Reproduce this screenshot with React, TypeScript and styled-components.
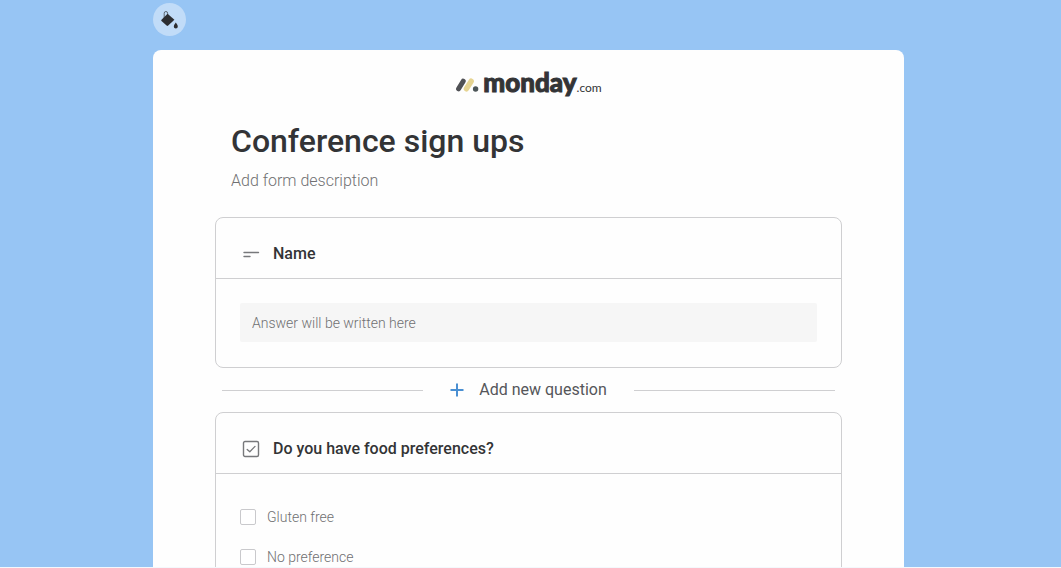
import React from "react";
import styled, { createGlobalStyle } from "styled-components";

const ink = "#333436";
const muted = "#707072";
const line = "#cfcfd1";

const GlobalStyle = createGlobalStyle`
  *, *::before, *::after { box-sizing: border-box; }
  body {
    margin: 0;
    background: #97c5f4;
    color: ${ink};
    font-family: Roboto, "Liberation Sans", sans-serif;
  }
  h1, h2, p { margin: 0; }
  button, input { font: inherit; color: inherit; }
`;

const Page = styled.div`
  height: 100vh;
  overflow: hidden;
  padding: 3px 4px 0 0;
  border-bottom: 1px solid #f4f8fc;
`;

const Column = styled.div`
  width: 100%;
  max-width: 751px;
  margin: 0 auto;
`;

const ThemeButton = styled.button`
  display: flex;
  align-items: center;
  justify-content: center;
  width: 33px;
  height: 33px;
  margin-bottom: 14px;
  padding: 0;
  border: 0;
  border-radius: 50%;
  background: #c1dcf8;
  cursor: pointer;
`;

const Sheet = styled.main`
  padding: 20px 62px 40px;
  border-radius: 8px 8px 0 0;
  background: #fefefe;
`;

const Brand = styled.div`
  display: flex;
  align-items: center;
  justify-content: center;
  gap: 4px;
  height: 30px;
  font-family: Lato, sans-serif;
`;

const Wordmark = styled.div`
  display: flex;
  align-items: baseline;
  line-height: 30px;
`;

const BrandName = styled.span`
  font-size: 26px;
  font-weight: 900;
  -webkit-text-stroke: 1px ${ink};
`;

const BrandSuffix = styled.span`
  font-size: 12px;
`;

const Heading = styled.header`
  padding: 21px 16px 0;
`;

const Title = styled.h1`
  font-size: 32px;
  font-weight: 500;
  line-height: 40px;
`;

const Description = styled.input`
  display: block;
  width: 100%;
  height: 24px;
  margin-top: 7px;
  padding: 0;
  border: 0;
  background: transparent;
  font-size: 16px;
  font-weight: 300;
  &::placeholder { color: ${muted}; opacity: 1; }
`;

const Questions = styled.div`
  margin-top: 25px;
`;

const Card = styled.section`
  border: 1px solid ${line};
  border-radius: 8px;
`;

const CardHeader = styled.div`
  display: flex;
  align-items: center;
  gap: 13px;
  height: 61px;
  padding: 12px 26px 0;
  border-bottom: 1px solid ${line};
`;

const Question = styled.h2`
  font-size: 16px;
  font-weight: 500;
  line-height: 24px;
`;

const CardBody = styled.div`
  padding: 24px 24px 25px;
`;

const Answer = styled.input`
  display: block;
  width: 100%;
  height: 39px;
  padding: 0 12px;
  border: 0;
  border-radius: 2px;
  background: #f6f6f6;
  font-size: 14px;
  font-weight: 300;
  &::placeholder { color: ${muted}; opacity: 1; }
`;

const Divider = styled.div`
  display: flex;
  align-items: center;
  gap: 27px;
  height: 44px;
  padding: 0 7px;
`;

const Rule = styled.span`
  flex: 1;
  height: 1px;
  background: ${line};
`;

const AddButton = styled.button`
  display: flex;
  align-items: center;
  gap: 15px;
  padding: 0;
  border: 0;
  background: none;
  color: #55565a;
  font-size: 16px;
  line-height: 24px;
  cursor: pointer;
`;

const Options = styled.div`
  display: flex;
  flex-direction: column;
  gap: 16px;
  padding: 31px 24px;
`;

const Option = styled.label`
  display: flex;
  align-items: center;
  gap: 11px;
  color: ${muted};
  font-size: 14px;
  font-weight: 300;
  line-height: 24px;
`;

const Tick = styled.input`
  appearance: none;
  width: 16px;
  height: 16px;
  margin: 0;
  border: 1px solid #c9c9cc;
  border-radius: 2px;
  background: #fff;
  &:checked { background: #0073ea; }
`;

const PaintIcon = () => (
  <svg width="22" height="22" viewBox="0 0 22 22" aria-hidden="true">
    <path d="M5.2 9V4.2a1.7 1.7 0 0 1 3.4 0V8" fill="none" stroke="#5a646e" strokeWidth="1" />
    <path d="M8.6 4.8 15.4 10.8 9.2 16.6Q8.4 17.2 7.6 16.6L2.5 12.1Q1.9 11.4 2.5 10.7Z" fill="#2d2e31" />
    <path d="M16.8 13.4Q19 16.2 18.8 17.4a2 2 0 0 1-4 0Q14.6 16.2 16.8 13.4Z" fill="#2d2e31" />
  </svg>
);

const BrandMark = () => (
  <svg width="24" height="16" viewBox="0 0 24 16" aria-hidden="true">
    <path d="M3.6 11.8 8.2 4.2" stroke="#505155" strokeWidth="5" strokeLinecap="round" />
    <path d="M11.4 11.8 16.2 4.2" stroke="#e6d492" strokeWidth="5.4" strokeLinecap="round" />
    <circle cx="20.6" cy="12" r="2.7" fill="#4c5557" />
  </svg>
);

const ShortTextIcon = () => (
  <svg width="18" height="18" viewBox="0 0 18 18" aria-hidden="true">
    <path d="M2 7.5H16.5M2 11.5H8" stroke="#77787b" strokeWidth="1.4" strokeLinecap="round" />
  </svg>
);

const CheckIcon = () => (
  <svg width="18" height="18" viewBox="0 0 18 18" fill="none" stroke="#77787b" aria-hidden="true">
    <rect x="1.5" y="1.5" width="15" height="15" rx="1.5" strokeWidth="1.4" />
    <path d="M5.2 9.4 7.8 11.8 13 6.4" strokeWidth="1.3" strokeLinecap="round" strokeLinejoin="round" />
  </svg>
);

const PlusIcon = () => (
  <svg width="14" height="14" viewBox="0 0 14 14" aria-hidden="true">
    <path d="M7 .5V13.5M.5 7H13.5" stroke="#4a8fd2" strokeWidth="2" />
  </svg>
);

const foodOptions = ["Gluten free", "No preference"];

export default function App() {
  return (
    <>
      <GlobalStyle />
      <Page>
        <Column>
          <ThemeButton aria-label="Change background">
            <PaintIcon />
          </ThemeButton>
          <Sheet>
            <Brand>
              <BrandMark />
              <Wordmark>
                <BrandName>monday</BrandName>
                <BrandSuffix>.com</BrandSuffix>
              </Wordmark>
            </Brand>
            <Heading>
              <Title>Conference sign ups</Title>
              <Description aria-label="Form description" placeholder="Add form description" />
            </Heading>
            <Questions>
              <Card>
                <CardHeader>
                  <ShortTextIcon />
                  <Question id="q-name">Name</Question>
                </CardHeader>
                <CardBody>
                  <Answer aria-labelledby="q-name" placeholder="Answer will be written here" />
                </CardBody>
              </Card>
              <Divider>
                <Rule />
                <AddButton>
                  <PlusIcon />
                  Add new question
                </AddButton>
                <Rule />
              </Divider>
              <Card>
                <CardHeader>
                  <CheckIcon />
                  <Question id="q-food">Do you have food preferences?</Question>
                </CardHeader>
                <Options role="group" aria-labelledby="q-food">
                  {foodOptions.map((name) => (
                    <Option key={name}>
                      <Tick type="checkbox" />
                      {name}
                    </Option>
                  ))}
                </Options>
              </Card>
            </Questions>
          </Sheet>
        </Column>
      </Page>
    </>
  );
}
